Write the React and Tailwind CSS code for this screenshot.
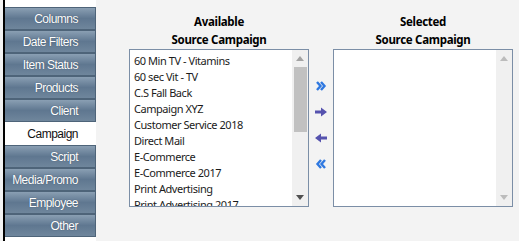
import React from "react";

const tabs = [
  "Columns",
  "Date Filters",
  "Item Status",
  "Products",
  "Client",
  "Campaign",
  "Script",
  "Media/Promo",
  "Employee",
  "Other",
];

const campaigns = [
  "60 Min TV - Vitamins",
  "60 sec Vit - TV",
  "C.S Fall Back",
  "Campaign XYZ",
  "Customer Service 2018",
  "Direct Mail",
  "E-Commerce",
  "E-Commerce 2017",
  "Print Advertising",
  "Print Advertising 2017",
];

const ScrollBar = ({ thumb }) => (
  <div className="w-[16px] h-full bg-[#f0f0f0] flex flex-col items-center shrink-0">
    <div className="h-[17px] w-full flex items-center justify-center">
      <svg width="8" height="5" viewBox="0 0 8 5">
        <path d="M0 5 L4 0 L8 5 Z" fill={thumb ? "#a3a3a3" : "#bcbcbc"} />
      </svg>
    </div>
    <div className="flex-1 w-full">
      {thumb && <div className="mx-auto w-[13px] h-[65px] bg-[#c1c1c1]" />}
    </div>
    <div className="h-[17px] w-full flex items-center justify-center">
      <svg width="8" height="5" viewBox="0 0 8 5">
        <path d="M0 0 L4 5 L8 0 Z" fill={thumb ? "#505050" : "#bcbcbc"} />
      </svg>
    </div>
  </div>
);

const Header = ({ top }) => (
  <div className="h-[49px] pt-[13px] text-center font-bold text-[11.5px] leading-[18px] tracking-[-0.3px] text-black">
    <div>{top}</div>
    <div>Source Campaign</div>
  </div>
);

const App = () => {
  return (
    <div
      className="w-[519px] h-[241px] bg-[#f3f3f3] flex overflow-hidden"
      style={{ fontFamily: '"Noto Sans", "Liberation Sans", sans-serif' }}
    >
      {/* Sidebar tabs */}
      <div
        className="ml-[3px] w-[93px] border-l-2 border-black bg-white pt-[7px]"
        style={{ fontFamily: '"Liberation Sans", Arial, sans-serif' }}
      >
        {tabs.map((t) =>
          t === "Campaign" ? (
            <div
              key={t}
              className="h-[23px] flex items-center justify-end pr-[18px] text-[12px] tracking-[-0.5px] text-[#111] bg-white"
            >
              {t}
            </div>
          ) : (
            <div
              key={t}
              className="h-[23px] flex items-center justify-end pr-[17px] text-[12px] tracking-[-0.5px] text-white border-t border-b border-[#4e6479] border-r bg-gradient-to-b from-[#8a9fb3] via-[#5f7790] to-[#6f869c] [text-shadow:0_0_1px_#34465a]"
            >
              {t}
            </div>
          )
        )}
      </div>

      {/* Main */}
      <div className="flex pl-[33px]">
        <div className="w-[180px]">
          <Header top="Available" />
          <div className="h-[158px] border border-[#7b8ea6] bg-white flex">
            <div className="flex-1 pl-[4px] pt-[3px] overflow-hidden text-[11px] leading-[16px] tracking-[-0.45px] text-[#1b1b1b]">
              {campaigns.map((c) => (
                <div key={c} className="whitespace-nowrap">
                  {c}
                </div>
              ))}
            </div>
            <ScrollBar thumb />
          </div>
        </div>

        <div className="w-[24px] pt-[79px] flex flex-col items-center gap-[12px]">
          <svg width="12" height="14" viewBox="0 0 12 14">
            <path d="M2 3 L5.5 7 L2 11 M6 3 L9.5 7 L6 11" stroke="#2f78e0" strokeWidth="2.4" fill="none" />
          </svg>
          <svg width="14" height="14" viewBox="0 0 14 14">
            <path d="M1 5.5 H7 V2.5 L13 7 L7 11.5 V8.5 H1 Z" fill="#5552ae" />
          </svg>
          <svg width="14" height="14" viewBox="0 0 14 14">
            <path d="M13 5.5 H7 V2.5 L1 7 L7 11.5 V8.5 H13 Z" fill="#5552ae" />
          </svg>
          <svg width="12" height="14" viewBox="0 0 12 14">
            <path d="M10 3 L6.5 7 L10 11 M6 3 L2.5 7 L6 11" stroke="#2f78e0" strokeWidth="2.4" fill="none" />
          </svg>
        </div>

        <div className="w-[180px]">
          <Header top="Selected" />
          <div className="h-[158px] border border-[#7b8ea6] bg-white flex">
            <div className="flex-1" />
            <ScrollBar />
          </div>
        </div>
      </div>
    </div>
  );
};

export default App;
